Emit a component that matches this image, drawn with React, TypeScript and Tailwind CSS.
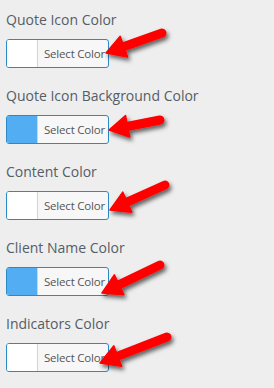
const items = [
  { label: "Quote Icon Color", swatch: "bg-white" },
  { label: "Quote Icon Background Color", swatch: "bg-[#52adf2]" },
  { label: "Content Color", swatch: "bg-white" },
  { label: "Client Name Color", swatch: "bg-[#52adf2]" },
  { label: "Indicators Color", swatch: "bg-white" },
];

// tail -> tip, page coordinates
const arrows = [
  [162, 33, 106, 53],
  [160, 120, 109, 130],
  [165, 185, 110, 210],
  [160, 265, 102, 293],
  [167, 337, 100, 363],
];

function Arrow({ x1, y1, x2, y2 }: { x1: number; y1: number; x2: number; y2: number }) {
  const dx = x2 - x1;
  const dy = y2 - y1;
  const len = Math.hypot(dx, dy);
  const ux = dx / len;
  const uy = dy / len;
  const head = 19;
  const half = 11;
  const bx = x2 - ux * head;
  const by = y2 - uy * head;
  const px = -uy;
  const py = ux;
  const pts = `${x2},${y2} ${bx + px * half},${by + py * half} ${bx - px * half},${by - py * half}`;
  return (
    <g filter="url(#shadow)">
      <line x1={x1} y1={y1} x2={bx + ux * 2} y2={by + uy * 2} stroke="#ff0000" strokeWidth={9} strokeLinecap="round" />
      <polygon points={pts} fill="#ff0000" stroke="#ff0000" strokeWidth={1.5} strokeLinejoin="round" />
    </g>
  );
}

export default function App() {
  return (
    <div className="relative w-[274px] h-[388px] bg-[#eeeeee] overflow-hidden pl-[6px] pt-[10px] font-['Open_Sans',sans-serif]">
      {items.map((it, idx) => (
        <div key={idx} className="mb-[18px]">
          <div className="text-[14px] leading-[20px] text-[#555d66] mb-[9px] whitespace-nowrap">{it.label}</div>
          <div className="flex w-[103px] h-[29px] rounded-[3px] border border-[#2b8ac4] bg-[#f7f7f7] overflow-hidden">
            <div className={`w-[31px] h-full shrink-0 ${it.swatch} border-r border-[#d4d4d4]`} />
            <div className="flex items-center pl-[6px] text-[11.5px] tracking-[-0.2px] text-[#555555] whitespace-nowrap">
              Select Color
            </div>
          </div>
        </div>
      ))}
      <svg className="absolute inset-0" width={274} height={388}>
        <defs>
          <filter id="shadow" x="-30%" y="-60%" width="160%" height="220%">
            <feDropShadow dx="2" dy="3" stdDeviation="2" floodColor="#000" floodOpacity="0.6" />
          </filter>
        </defs>
        {arrows.map(([a, b, c, d], i) => (
          <Arrow key={i} x1={a} y1={b} x2={c} y2={d} />
        ))}
      </svg>
    </div>
  );
}
